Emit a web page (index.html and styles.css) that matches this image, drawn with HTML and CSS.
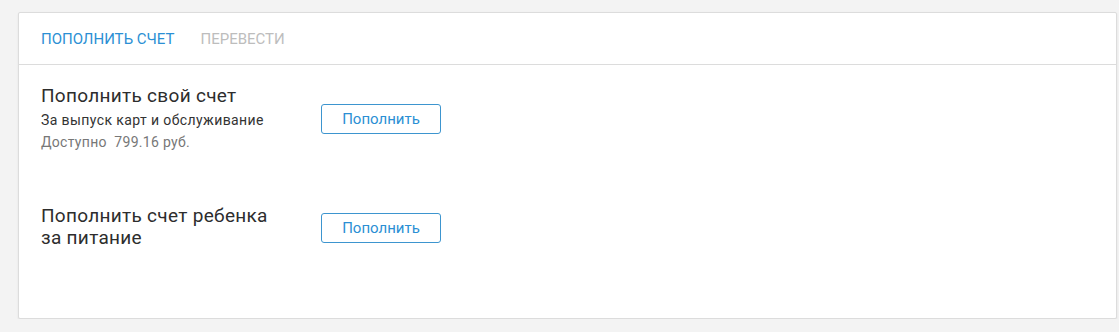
FILE: index.html
```html
<!DOCTYPE html>
<html lang="ru">
<head>
  <meta charset="UTF-8"/>
  <title>Пополнить счет</title>
  <link rel="stylesheet" href="styles.css">
</head>
<body>

  <div class="card">
    <div class="tabs">
      <a href="#" class="tab active">Пополнить счет</a>
      <a href="#" class="tab">Перевести</a>
    </div>

    <div class="card-body">
      <div class="row">
        <div class="info">
          <div class="title">Пополнить свой счет</div>
          <div class="sub">За выпуск карт и обслуживание</div>
          <div class="avail">Доступно&nbsp; 799.16 руб.</div>
        </div>
        <button class="btn">Пополнить</button>
      </div>

      <div class="row">
        <div class="info">
          <div class="title">Пополнить счет ребенка за питание</div>
        </div>
        <button class="btn">Пополнить</button>
      </div>
    </div>
  </div>

</body>
</html>
```

FILE: styles.css
```css
body {
  background-color: #f3f3f3;
  color: #333;
  font-family: Roboto, 'Liberation Sans', sans-serif;
  margin: 0; padding: 12px 2px 0 18px;
}
.card { background: #fff; border: 1px solid #dcdcdc; border-radius: 2px; box-shadow: 0 1px 2px rgba(0,0,0,0.08); height: 305px; }

/* Tabs */
.tabs { display: flex; gap: 26px; height: 51px; align-items: center; padding: 0 22px; border-bottom: 1px solid #dcdcdc; }
.tab { font-size: 15px; text-transform: uppercase; text-decoration: none; color: #bdbdbd; padding-top: 1px; }
.tab.active { color: #2b8fd4; }

/* Rows */
.card-body { padding: 20px 22px; display: flex; flex-direction: column; gap: 52px; }
.row { display: flex; align-items: center; }
.info { width: 240px; margin-right: 40px; }
.title { font-size: 19px; line-height: 22px; letter-spacing: 0.3px; margin-bottom: 2px; color: #2d2d2d; }
.sub { font-size: 14px; line-height: 22px; letter-spacing: 0.4px; color: #333; }
.avail { font-size: 14px; line-height: 22px; letter-spacing: 0.3px; color: #777; }
.btn { width: 120px; height: 30px; background: #fff; border: 1px solid #3d95cf; border-radius: 3px; color: #2b8fd4; font-family: inherit; font-size: 15px; cursor: pointer; }
```
